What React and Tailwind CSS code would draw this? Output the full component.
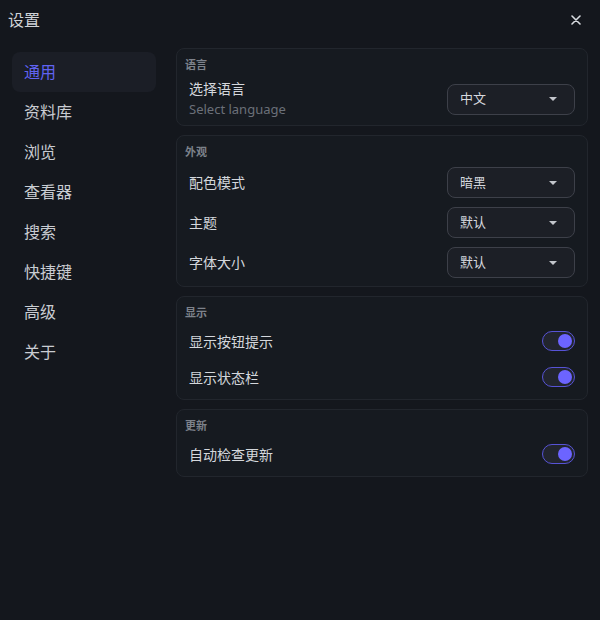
import React from "react";

const navItems = ["通用", "资料库", "浏览", "查看器", "搜索", "快捷键", "高级", "关于"];

function Caret() {
  return (
    <svg width="8" height="4" viewBox="0 0 8 4" className="shrink-0">
      <path d="M0 0 L8 0 L4 4 Z" fill="#c3c6cc" />
    </svg>
  );
}

function Select({ value }) {
  return (
    <div className="flex h-[31px] w-[128px] shrink-0 items-center justify-between rounded-lg border border-[#3d4049] bg-[#1c1f26] pl-3 pr-[17px] text-[13px] text-[#d5d8de]">
      <span>{value}</span>
      <Caret />
    </div>
  );
}

function Toggle() {
  return (
    <div className="flex h-[20px] w-[33px] shrink-0 items-center justify-end rounded-full border border-[#5753d6] bg-[#22252e] pr-[2px]">
      <div className="h-[14px] w-[14px] rounded-full bg-[#6c64ff]" />
    </div>
  );
}

function Card({ title, children, className = "" }) {
  return (
    <div className={`rounded-lg border border-[#22262d] bg-[#161a20] ${className}`}>
      <div className="pl-2 pt-2 text-[11px] font-bold leading-4 text-[#7d828b]">{title}</div>
      {children}
    </div>
  );
}

function SelectRow({ label, value }) {
  return (
    <div className="flex h-[31px] items-center justify-between px-3">
      <span className="text-[14px] text-[#d4d7dc]">{label}</span>
      <Select value={value} />
    </div>
  );
}

function ToggleRow({ label }) {
  return (
    <div className="flex h-9 items-center justify-between px-3">
      <span className="text-[14px] text-[#d4d7dc]">{label}</span>
      <Toggle />
    </div>
  );
}

export default function App() {
  return (
    <div
      className="flex h-[620px] w-[600px] flex-col bg-[#14171d]"
      style={{ fontFamily: '"Noto Sans", "Noto Sans CJK SC", sans-serif' }}
    >
      <div className="flex h-10 items-center justify-between pl-2 pr-[19px]">
        <span className="text-[16px] text-[#d0d3d8]">设置</span>
        <svg width="10" height="10" viewBox="0 0 10 10">
          <path d="M1 1 L9 9 M9 1 L1 9" stroke="#d8dbe0" strokeWidth="1.6" strokeLinecap="round" />
        </svg>
      </div>
      <div className="flex flex-1">
        <nav className="flex w-[156px] flex-col pl-3 pt-3">
          {navItems.map((item, i) => (
            <div
              key={item}
              className={`flex h-10 items-center rounded-lg px-3 text-[16px] ${
                i === 0 ? "bg-[#1b1e26] text-[#6063f2]" : "text-[#c9ccd2]"
              }`}
            >
              {item}
            </div>
          ))}
        </nav>
        <main className="ml-5 flex flex-1 flex-col gap-[9px] pr-3 pt-2">
          <Card title="语言" className="pb-[6px]">
            <div className="mt-[6px] flex items-center justify-between px-3">
              <div className="flex flex-col">
                <span className="text-[14px] leading-5 text-[#d4d7dc]">选择语言</span>
                <span className="text-[13px] leading-5 text-[#6b7079]">Select language</span>
              </div>
              <Select value="中文" />
            </div>
          </Card>
          <Card title="外观" className="pb-2">
            <div className="mt-[7px] flex flex-col gap-[9px]">
              <SelectRow label="配色模式" value="暗黑" />
              <SelectRow label="主题" value="默认" />
              <SelectRow label="字体大小" value="默认" />
            </div>
          </Card>
          <Card title="显示" className="pb-[4px]">
            <div className="mt-[2px] flex flex-col">
              <ToggleRow label="显示按钮提示" />
              <ToggleRow label="显示状态栏" />
            </div>
          </Card>
          <Card title="更新" className="pb-[4px]">
            <div className="mt-[2px] flex flex-col">
              <ToggleRow label="自动检查更新" />
            </div>
          </Card>
        </main>
      </div>
    </div>
  );
}
